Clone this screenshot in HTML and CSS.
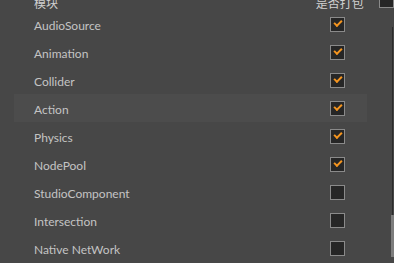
FILE: index.html
```html
<!DOCTYPE html>
<html lang="zh">
<head>
    <meta charset="UTF-8">
    <title>模块</title>
    <link rel="stylesheet" href="styles.css">
</head>
<body>

<div class="panel">
    <div class="head">
        <span class="head-name">模块</span>
        <span class="head-pack">是否打包</span>
        <span class="box head-box"></span>
    </div>

    <ul class="modules">
        <li><span class="name">AudioSource</span><span class="box on"></span></li>
        <li><span class="name">Animation</span><span class="box on"></span></li>
        <li><span class="name">Collider</span><span class="box on"></span></li>
        <li class="hover"><span class="name">Action</span><span class="box on"></span></li>
        <li><span class="name">Physics</span><span class="box on"></span></li>
        <li><span class="name">NodePool</span><span class="box on"></span></li>
        <li><span class="name">StudioComponent</span><span class="box"></span></li>
        <li><span class="name">Intersection</span><span class="box"></span></li>
        <li><span class="name">Native NetWork</span><span class="box"></span></li>
    </ul>
</div>

<!-- scrollbar overlay -->
<div class="track"></div>
<div class="thumb"></div>

</body>
</html>
```

FILE: styles.css
```css
/* dark editor panel */
body {
    margin: 0;
    background-color: #474747;
    color: #c4c4c4;
    font-family: Lato, "Noto Sans CJK SC", sans-serif;
    font-size: 12px;
    overflow: hidden;
    height: 263px;
}
.panel {
    margin-top: -6px;
}
.head {
    display: flex;
    align-items: center;
    height: 16px;
    padding-left: 34px;
    color: #d0d0d0;
}
.head-name {
    width: 285px;
}
.head-pack {
    width: 64px;
}
.box {
    display: block;
    width: 13px;
    height: 13px;
    border: 1px solid #8a8a8a;
    background-color: #262626;
    position: relative;
}
.head-box {
    margin-top: -3px;
}
.modules {
    list-style: none;
    margin: 0 0 0 14px;
    padding: 0;
    width: 353px;
}
.modules li {
    display: grid;
    grid-template-columns: 296px 15px;
    align-items: center;
    height: 28px;
    padding-left: 20px;
}
.modules .name {
    padding-top: 2px;
}
.modules li.hover {
    background-color: #4c4c4c;
}
/* orange tick */
.box.on::after {
    content: "";
    position: absolute;
    left: 3px;
    top: 2px;
    width: 6px;
    height: 3px;
    border-left: 2.5px solid #f5951f;
    border-bottom: 2.5px solid #f5951f;
    transform: rotate(-45deg);
}
.track {
    position: fixed;
    left: 392px;
    top: 27px;
    width: 1px;
    height: 188px;
    background-color: #2b2b2b;
}
.thumb {
    position: fixed;
    left: 391px;
    top: 215px;
    width: 3px;
    height: 42px;
    background-color: #7d7d7d;
}
```
